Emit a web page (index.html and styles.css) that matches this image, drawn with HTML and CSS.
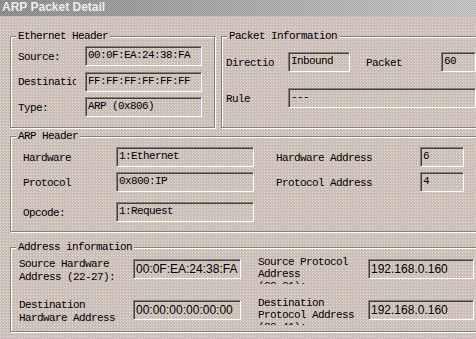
FILE: index.html
```html
<!doctype html>
<html>
<head>
    <title>ARP Packet Detail</title>
    <link rel="stylesheet" href="styles.css">
</head>
<body>
    <div class="title-bar">ARP Packet Detail</div>
    <div class="dialog-body">
        <div class="top-row">
            <fieldset class="group ethernet">
                <legend>Ethernet Header</legend>
                <div class="eth-grid">
                    <span class="label">Source:</span>
                    <div class="edit">00:0F:EA:24:38:FA</div>
                    <span class="label">Destination:</span>
                    <div class="edit">FF:FF:FF:FF:FF:FF</div>
                    <span class="label">Type:</span>
                    <div class="edit">ARP (0x806)</div>
                </div>
            </fieldset>
            <fieldset class="group packet">
                <legend>Packet Information</legend>
                <div class="packet-grid">
                    <span class="label short">Direction</span>
                    <div class="edit">Inbound</div>
                    <span class="label indent">Packet</span>
                    <div class="edit">60</div>
                    <span class="label short">Rule</span>
                    <div class="edit wide">---</div>
                </div>
            </fieldset>
        </div>

        <fieldset class="group arp">
            <legend>ARP Header</legend>
            <div class="arp-grid">
                <span class="label">Hardware</span>
                <div class="edit">1:Ethernet</div>
                <span class="label indent">Hardware Address</span>
                <div class="edit">6</div>
                <span class="label">Protocol</span>
                <div class="edit">0x800:IP</div>
                <span class="label indent">Protocol Address</span>
                <div class="edit">4</div>
                <span class="label">Opcode:</span>
                <div class="edit">1:Request</div>
            </div>
        </fieldset>

        <fieldset class="group address">
            <legend>Address information</legend>
            <div class="address-grid">
                <span class="multi">Source Hardware<br>Address (22-27):</span>
                <div class="edit value">00:0F:EA:24:38:FA</div>
                <span class="multi clipped">Source Protocol<br>Address<br>(28-31):</span>
                <div class="edit value">192.168.0.160</div>
                <span class="multi">Destination<br>Hardware Address</span>
                <div class="edit value">00:00:00:00:00:00</div>
                <span class="multi clipped">Destination<br>Protocol Address<br>(38-41):</span>
                <div class="edit value">192.168.0.160</div>
            </div>
        </fieldset>
    </div>
</body>
</html>
```

FILE: styles.css
```css
body {
    margin: 0;
    width: 476px;
    height: 339px;
    overflow: hidden;
    font-family: "Liberation Mono", "DejaVu Sans Mono", monospace;
    font-size: 11px;
    letter-spacing: -0.6px;
    color: #000;
    background-color: #c8bdbd;
    background-image:
        conic-gradient(from 270deg at 1px 1px, #ece9a4 25%, transparent 0),
        conic-gradient(from 270deg at 1px 1px, #e6c6cc 25%, transparent 0);
    background-size: 3px 3px, 3px 3px;
    background-position: 0 0, 1px 2px;
    background-attachment: fixed;
}
.title-bar {
    height: 16px;
    line-height: 16px;
    padding-left: 2px;
    font: bold 12px "Liberation Sans", Arial, sans-serif;
    letter-spacing: 0;
    color: #ececec;
    background-color: #a0a0a0;
    background-image:
        repeating-conic-gradient(rgba(255,255,255,0.16) 0 25%, rgba(0,0,0,0.08) 0 50%),
        linear-gradient(90deg, #888888, #a4a4a4 45%, #c4c4c4);
    background-size: 2px 2px, 100% 100%;
}
.dialog-body {
    padding: 15px 0 0 10px;
}
.top-row {
    display: flex;
    gap: 6px;
    height: 97px;
}
.group {
    margin: 0;
    padding: 0;
    min-width: 0;
    box-sizing: border-box;
    border: 1px solid #808080;
    box-shadow: inset 1px 1px 0 #fff, 1px 1px 0 #fff;
}
.group legend {
    margin-left: 5px;
    padding: 0 2px;
    line-height: 11px;
    background-color: #c8bdbd;
    background-image:
        conic-gradient(from 270deg at 1px 1px, #ece9a4 25%, transparent 0),
        conic-gradient(from 270deg at 1px 1px, #e6c6cc 25%, transparent 0);
    background-size: 3px 3px, 3px 3px;
    background-position: 0 0, 1px 2px;
    background-attachment: fixed;
}
.ethernet {
    width: 205px;
    flex-shrink: 0;
}
.packet {
    width: 270px;
    flex-shrink: 0;
}
.label {
    display: flex;
    align-items: center;
    height: 20px;
    padding-top: 1px;
    box-sizing: border-box;
    white-space: nowrap;
    overflow: hidden;
}
.edit {
    box-sizing: border-box;
    height: 20px;
    padding: 2px 0 0 2px;
    line-height: 13px;
    white-space: nowrap;
    overflow: hidden;
    border: 1px solid;
    border-color: #808080 #fff #fff #808080;
    box-shadow: inset 1px 1px 0 #404040;
}
.eth-grid {
    display: grid;
    grid-template-columns: 58px 117px;
    grid-auto-rows: 20px;
    column-gap: 9px;
    row-gap: 5.5px;
    padding: 4px 0 0 7px;
}
.packet-grid {
    display: grid;
    grid-template-columns: 62px 62px 91px 35px;
    grid-auto-rows: 20px;
    row-gap: 16px;
    padding: 10px 0 0 4px;
}
.label.short {
    width: 48px;
}
.label.indent {
    padding-left: 16px;
}
.edit.wide {
    grid-column: 2 / 5;
}
.arp {
    width: 480px;
    height: 101px;
    margin-top: 3px;
}
.arp-grid {
    display: grid;
    grid-template-columns: 93px 138px 166px 44px;
    grid-template-rows: 20px 20px 25px;
    row-gap: 5px;
    align-items: end;
    padding: 5px 0 0 12px;
}
.arp-grid .label.indent {
    padding-left: 22px;
}
.address {
    width: 480px;
    height: 90px;
    margin-top: 10px;
}
.address-grid {
    display: grid;
    grid-template-columns: 114px 108px 127px 106px;
    grid-template-rows: 28px 28px;
    row-gap: 13px;
    align-items: start;
    padding: 3px 0 0 8px;
}
.multi {
    margin-top: 2px;
    line-height: 13px;
    white-space: nowrap;
}
.multi.clipped {
    margin-top: 0;
    padding-left: 17px;
    height: 28px;
    line-height: 12px;
    overflow: hidden;
}
.edit.value {
    margin-top: 3px;
    font-family: "Liberation Sans", Arial, sans-serif;
    font-size: 12px;
    letter-spacing: 0;
    line-height: 14px;
}
```
